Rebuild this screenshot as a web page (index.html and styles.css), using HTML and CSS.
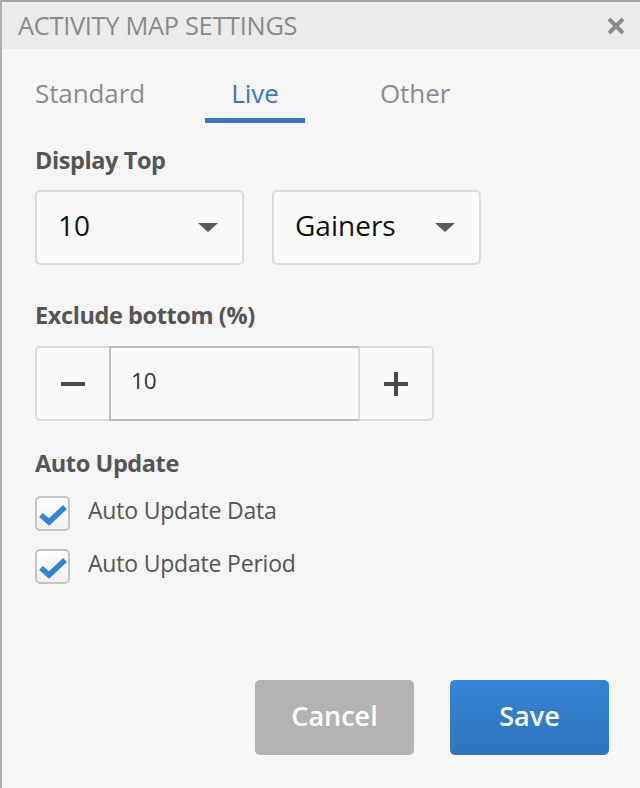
FILE: index.html
```html
<!DOCTYPE html>
<html>
<head>
<meta charset="utf-8">
<link rel="stylesheet" href="styles.css">
</head>
<body>
<div class="dialog">
  <div class="header">
    <span class="title">ACTIVITY MAP SETTINGS</span>
    <svg class="close" width="20" height="20" viewBox="0 0 20 20"><path d="M3 3 L17 17 M17 3 L3 17" stroke="#8c8c8c" stroke-width="4" stroke-linecap="butt"/></svg>
  </div>
  <div class="content">
    <div class="tabs">
      <div class="tab tab-standard">Standard</div>
      <div class="tab tab-live active">Live</div>
      <div class="tab tab-other">Other</div>
    </div>

    <div class="label label-top">Display Top</div>
    <div class="selects">
      <div class="select"><span class="select-text">10</span><span class="caret"></span></div>
      <div class="select"><span class="select-text">Gainers</span><span class="caret"></span></div>
    </div>

    <div class="label label-excl">Exclude bottom (%)</div>
    <div class="stepper">
      <div class="step-btn"><svg width="24" height="24" viewBox="0 0 24 24"><rect x="0" y="10" width="24" height="4" fill="#4a4a4a"/></svg></div>
      <div class="step-input">10</div>
      <div class="step-btn"><svg width="24" height="24" viewBox="0 0 24 24"><rect x="0" y="10" width="24" height="4" fill="#4a4a4a"/><rect x="10" y="0" width="4" height="24" fill="#4a4a4a"/></svg></div>
    </div>

    <div class="label label-auto">Auto Update</div>
    <div class="checks">
      <div class="check-row">
        <span class="box"><svg width="30" height="24" viewBox="0 0 30 24"><path d="M3 12 L11 19 L27 4" fill="none" stroke="#2e85d6" stroke-width="5.5" stroke-linejoin="miter"/></svg></span>
        <span class="check-text">Auto Update Data</span>
      </div>
      <div class="check-row">
        <span class="box"><svg width="30" height="24" viewBox="0 0 30 24"><path d="M3 12 L11 19 L27 4" fill="none" stroke="#2e85d6" stroke-width="5.5" stroke-linejoin="miter"/></svg></span>
        <span class="check-text">Auto Update Period</span>
      </div>
    </div>

    <div class="actions">
      <div class="btn btn-cancel">Cancel</div>
      <div class="btn btn-save">Save</div>
    </div>
  </div>
</div>
</body>
</html>
```

FILE: styles.css
```css
html, body {
  margin: 0;
  padding: 0;
  background: #f6f6f6;
}
body {
  font-family: "Open Sans", "Noto Sans", sans-serif;
  width: 640px;
  height: 788px;
  overflow: hidden;
}
.dialog {
  box-sizing: border-box;
  width: 640px;
  height: 788px;
  border-top: 2px solid #a3a3a3;
  border-left: 2px solid #b0b0b0;
  background: #f6f6f6;
}
.header {
  height: 47px;
  background: #ebebeb;
  display: flex;
  align-items: center;
  justify-content: space-between;
  padding: 0 14px 0 16px;
}
.title {
  font-size: 25.4px;
  color: #8a8a8a;
  letter-spacing: -0.3px;
  padding-bottom: 2px;
}
.close {
  display: block;
}
.content {
  padding: 0 0 0 33px;
}
.tabs {
  display: flex;
  height: 77px;
  align-items: flex-start;
  padding-top: 26px;
  box-sizing: border-box;
}
.tab {
  font-size: 26px;
  color: #8d8d8d;
  line-height: 36px;
  letter-spacing: -0.1px;
}
.tab-standard {
  width: 170px;
}
.tab-live {
  color: #3a74c9;
  width: 100px;
  text-align: center;
  padding-bottom: 7px;
  border-bottom: 5px solid #3d75cb;
  margin-right: 75px;
}
.label {
  font-size: 23.5px;
  font-weight: 700;
  color: #555;
  letter-spacing: -0.4px;
  line-height: 30px;
}
.label-top {
  margin-top: 19px;
}
.selects {
  display: flex;
  gap: 28px;
  margin-top: 15px;
}
.select {
  box-sizing: border-box;
  width: 209px;
  height: 75px;
  border: 2px solid #dcdcdc;
  border-radius: 5px;
  background: #fafafa;
  display: flex;
  align-items: center;
  justify-content: space-between;
  padding: 0 24px 0 21px;
  font-size: 28px;
  color: #111;
}
.select-text {
  padding-bottom: 5px;
}
.caret {
  width: 0;
  height: 0;
  border-left: 10px solid transparent;
  border-right: 10px solid transparent;
  border-top: 9px solid #5a5a5a;
}
.label-excl {
  margin-top: 35px;
}
.stepper {
  display: flex;
  margin-top: 16px;
  box-sizing: border-box;
  width: 399px;
  height: 75px;
  border: 2px solid #dcdcdc;
  border-radius: 5px;
  background: #fafafa;
}
.step-btn {
  width: 72px;
  display: flex;
  align-items: center;
  justify-content: center;
}
.step-input {
  flex: 1;
  border-left: 2px solid #bdbdbd;
  border-right: 2px solid #dcdcdc;
  margin: -2px 0;
  border-top: 2px solid #bdbdbd;
  border-bottom: 2px solid #bdbdbd;
  display: flex;
  align-items: center;
  padding-left: 20px;
  padding-bottom: 6px;
  font-size: 22.5px;
  color: #333;
}
.label-auto {
  margin-top: 27px;
}
.checks {
  margin-top: 16px;
  display: flex;
  flex-direction: column;
  gap: 15px;
}
.check-row {
  display: flex;
  align-items: center;
  gap: 18px;
}
.box {
  box-sizing: border-box;
  width: 35px;
  height: 35px;
  border: 2px solid #c4c4c4;
  border-radius: 5px;
  background: linear-gradient(#ffffff, #f0f0f0);
  display: flex;
  align-items: center;
  justify-content: center;
}
.box svg {
  margin-left: 1px;
  margin-top: 3px;
}
.check-text {
  font-size: 23px;
  color: #555;
  letter-spacing: -0.2px;
  padding-bottom: 6px;
}
.actions {
  display: flex;
  justify-content: flex-end;
  gap: 36px;
  margin-top: 95px;
  padding-right: 31px;
}
.btn {
  width: 159px;
  height: 75px;
  border-radius: 5px;
  display: flex;
  align-items: center;
  justify-content: center;
  color: #fff;
  font-size: 27px;
  font-weight: 600;
  padding-bottom: 4px;
  box-sizing: border-box;
}
.btn-cancel {
  background: #b3b3b3;
}
.btn-save {
  background: linear-gradient(#3386d6, #2f74bd);
}
```
